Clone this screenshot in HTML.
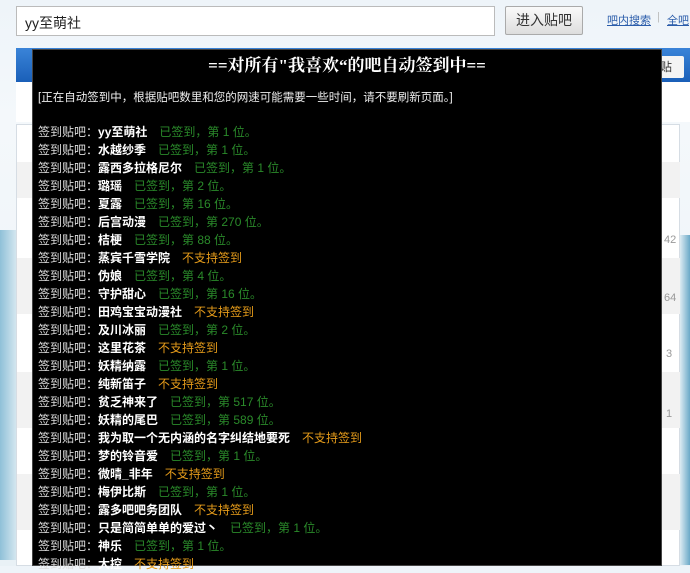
<!DOCTYPE html>
<html><head><meta charset="utf-8"><style>
*{margin:0;padding:0;box-sizing:border-box}
body{width:690px;height:566px;overflow:hidden;position:relative;font-family:"Liberation Sans","Noto Sans CJK SC",sans-serif;background:linear-gradient(#eef4f9,#f4f8fb 120px,#e9f1f6);}
.abs{position:absolute}
.srch{left:16px;top:6px;width:479px;height:30px;border:1px solid #bbb;background:#fff;font-size:14px;padding:6px 8px;color:#222}
.btn{left:505px;top:6px;width:78px;height:29px;border:1px solid #aaa;border-radius:2px;background:linear-gradient(#fafafa,#ddd);font-size:14px;text-align:center;line-height:27px;color:#333}
.lk{top:12px;font-size:11px;color:#2a5caa;text-decoration:underline}
.bar{left:16px;top:48px;width:674px;height:34px;background:linear-gradient(#3a84d8,#1a5fb8)}
.panel{left:16px;top:124px;width:664px;height:442px;background:#fff;border:1px solid #d6dde4}
.gray{background:#f2f2f2;left:17px;width:663px;height:36px}
.ov{left:32px;top:49px;width:630px;height:517px;background:#000;border:1px solid #444;color:#fff;font-size:12px}
.t{position:absolute;left:0;right:0;top:1px;text-align:center;font-size:17px;font-weight:bold;font-family:"Liberation Serif","Noto Serif CJK SC",serif}
.n{position:absolute;left:5px;top:39px;font-size:11.5px;color:#eee}
.rows{position:absolute;left:5px;top:73px;font-size:12px;line-height:18px}
.rows b{color:#fff}
.g{color:#2a8a2a;margin-left:12px}
.o{color:#e69c1a;margin-left:12px}
.rows div{color:#ddd;white-space:nowrap}
.num{font-size:11px;color:#999}
</style></head><body>
<div class="abs" style="left:0;top:230px;width:18px;height:330px;background:linear-gradient(90deg,#8fc0d8,#dcebf2)"></div>
<div class="abs" style="left:680px;top:235px;width:10px;height:330px;background:linear-gradient(90deg,#dcebf2,#6aa9c8)"></div>
<div class="abs srch">yy至萌社</div>
<div class="abs btn">进入贴吧</div>
<div class="abs lk" style="left:607px">吧内搜索</div>
<div class="abs" style="left:657px;top:11px;font-size:11px;color:#bbb">|</div>
<div class="abs lk" style="left:667px">全吧</div>
<div class="abs bar"></div>
<div class="abs" style="left:660px;top:56px;width:24px;height:22px;background:#f4f4f4;border-radius:2px;font-size:12px;line-height:22px;color:#333">贴</div>
<div class="abs" style="left:16px;top:82px;width:674px;height:40px;background:#fff"></div>
<div class="abs panel"></div>
<div class="abs gray" style="top:162px"></div>
<div class="abs gray" style="top:258px;height:56px"></div>
<div class="abs gray" style="top:372px;height:56px"></div>
<div class="abs gray" style="top:474px;height:56px"></div>
<div class="abs num" style="left:664px;top:234px">42</div>
<div class="abs num" style="left:664px;top:292px">64</div>
<div class="abs num" style="left:666px;top:348px">3</div>
<div class="abs num" style="left:666px;top:408px">1</div>
<div class="abs ov">
<div class="t">==对所有"我喜欢“的吧自动签到中==</div>
<div class="n">[正在自动签到中，根据贴吧数里和您的网速可能需要一些时间，请不要刷新页面。]</div>
<div class="rows">
<div>签到贴吧：<b>yy至萌社</b><span class="g">已签到，第 1 位。</span></div>
<div>签到贴吧：<b>水越纱季</b><span class="g">已签到，第 1 位。</span></div>
<div>签到贴吧：<b>露西多拉格尼尔</b><span class="g">已签到，第 1 位。</span></div>
<div>签到贴吧：<b>璐瑶</b><span class="g">已签到，第 2 位。</span></div>
<div>签到贴吧：<b>夏露</b><span class="g">已签到，第 16 位。</span></div>
<div>签到贴吧：<b>后宫动漫</b><span class="g">已签到，第 270 位。</span></div>
<div>签到贴吧：<b>桔梗</b><span class="g">已签到，第 88 位。</span></div>
<div>签到贴吧：<b>蒸宾千雪学院</b><span class="o">不支持签到</span></div>
<div>签到贴吧：<b>伪娘</b><span class="g">已签到，第 4 位。</span></div>
<div>签到贴吧：<b>守护甜心</b><span class="g">已签到，第 16 位。</span></div>
<div>签到贴吧：<b>田鸡宝宝动漫社</b><span class="o">不支持签到</span></div>
<div>签到贴吧：<b>及川冰丽</b><span class="g">已签到，第 2 位。</span></div>
<div>签到贴吧：<b>这里花茶</b><span class="o">不支持签到</span></div>
<div>签到贴吧：<b>妖精纳露</b><span class="g">已签到，第 1 位。</span></div>
<div>签到贴吧：<b>纯新笛子</b><span class="o">不支持签到</span></div>
<div>签到贴吧：<b>贫乏神来了</b><span class="g">已签到，第 517 位。</span></div>
<div>签到贴吧：<b>妖精的尾巴</b><span class="g">已签到，第 589 位。</span></div>
<div>签到贴吧：<b>我为取一个无内涵的名字纠结地要死</b><span class="o">不支持签到</span></div>
<div>签到贴吧：<b>梦的铃音爱</b><span class="g">已签到，第 1 位。</span></div>
<div>签到贴吧：<b>微晴_非年</b><span class="o">不支持签到</span></div>
<div>签到贴吧：<b>梅伊比斯</b><span class="g">已签到，第 1 位。</span></div>
<div>签到贴吧：<b>露多吧吧务团队</b><span class="o">不支持签到</span></div>
<div>签到贴吧：<b>只是简简单单的爱过丶</b><span class="g">已签到，第 1 位。</span></div>
<div>签到贴吧：<b>神乐</b><span class="g">已签到，第 1 位。</span></div>
<div>签到贴吧：<b>大控</b><span class="o">不支持签到</span></div>
</div>
</div>
</body></html>
